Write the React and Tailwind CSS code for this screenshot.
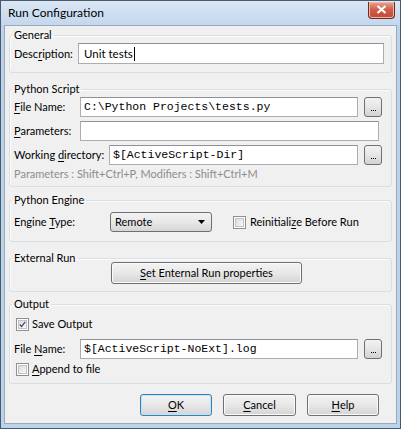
import React from 'react'

function Mn({ children }) {
    return <span className="underline underline-offset-[2px] decoration-[1px]">{children}</span>
}

function Label({ children, className = '' }) {
    return <span className={`shrink-0 whitespace-nowrap ${className}`}>{children}</span>
}

function TextBox({ children, className = '', mono = true }) {
    return (
        <div className={`flex h-[20px] shrink-0 items-center overflow-hidden whitespace-nowrap border border-[#abadb3] border-t-[#8e9298] bg-white text-black ${mono ? "px-[3px] font-['Liberation_Mono',monospace] text-[11.5px] text-[#1a1a1a]" : 'px-[5px] text-[11.5px]'} ${className}`}>
            {children}
        </div>
    )
}

function DotsButton() {
    return (
        <div className="ml-[6px] flex h-[20px] w-[18px] shrink-0 items-end justify-center rounded-[3px] border border-[#707070] bg-gradient-to-b from-[#f2f2f2] via-[#e6e6e6] to-[#d2d2d2] pb-[5px] text-black">
            <div className="flex gap-[1px]">
                <span className="h-[1px] w-[1px] bg-black" />
                <span className="h-[1px] w-[1px] bg-black" />
                <span className="h-[1px] w-[1px] bg-black" />
            </div>
        </div>
    )
}

function Button({ children, className = '', primary = false }) {
    return (
        <div className={`flex h-[22px] shrink-0 items-center justify-center whitespace-nowrap rounded-[3px] border bg-gradient-to-b from-[#f3f3f3] via-[#e8e8e8] to-[#d4d4d4] text-black ${primary ? 'border-[#3c7fb1] shadow-[inset_0_0_0_1px_#bfe4f8]' : 'border-[#707070] shadow-[inset_0_0_0_1px_#fbfbfb]'} ${className}`}>
            {children}
        </div>
    )
}

function CheckBox({ checked = false }) {
    return (
        <div className="flex h-[13px] w-[13px] shrink-0 items-center justify-center border border-[#8f8f8f] bg-white">
            <div className="flex h-[9px] w-[9px] items-center justify-center border border-[#c3c3c3] bg-gradient-to-br from-[#dcdcdc] to-[#f8f8f8]">
                {checked && (
                    <svg width="9" height="9" viewBox="0 0 9 9">
                        <path d="M1 4.5 L3.4 7 L8 1" fill="none" stroke="#3c4f75" strokeWidth="1.6" />
                    </svg>
                )}
            </div>
        </div>
    )
}

function Group({ title, children, className = '' }) {
    return (
        <fieldset className={`rounded-[3px] border border-[#d5dfe5] px-[4px] shadow-[inset_1px_1px_0_#fcfcfc] ${className}`}>
            <legend className="-ml-[2px] px-[2px] leading-[16px] text-black">{title}</legend>
            {children}
        </fieldset>
    )
}

export default function App() {
    return (
        <div className="h-[429px] w-[401px] overflow-hidden border border-[#4b5a6b] bg-[#bcd3ec] font-['Lato',sans-serif] text-[11px] leading-[16px] text-black">
            <div className="flex h-[24px] items-center justify-between bg-gradient-to-b from-[#dae7f5] to-[#c3d7ed] pl-[7px] pr-[5px]">
                <span className="text-[12px] leading-none">Run Configuration</span>
                <div className="-mt-[6px] flex h-[17px] w-[27px] items-center justify-center rounded-b-[4px] border border-t-0 border-[#6b2a22] bg-gradient-to-b from-[#e8a493] via-[#cf5a45] to-[#c24a36] shadow-[inset_0_0_0_1px_#f0b8a8]">
                    <svg width="11" height="9" viewBox="0 0 11 9">
                        <path d="M1.5 1 L9.5 8 M9.5 1 L1.5 8" stroke="#fff" strokeWidth="2.2" />
                    </svg>
                </div>
            </div>

            <div className="mx-[3px] h-[399px] border border-[#9aaabb] bg-[#f0f0f0] px-[4px]">
                <Group title="General" className="mt-[1px] pb-[8px]">
                    <div className="flex items-center">
                        <Label className="w-[64px]">Desc<Mn>r</Mn>iption:</Label>
                        <TextBox className="h-[21px] w-[306px]" mono={false}>
                            <span>Unit tests</span>
                            <span className="ml-[1px] h-[14px] w-[1px] bg-black" />
                        </TextBox>
                    </div>
                </Group>

                <Group title="Python Script" className="mt-[8px] pb-[4px]">
                    <div className="flex items-center">
                        <Label className="w-[66px]"><Mn>F</Mn>ile Name:</Label>
                        <TextBox className="w-[278px]">C:\Python Projects\tests.py</TextBox>
                        <DotsButton />
                    </div>
                    <div className="mt-[4px] flex items-center">
                        <Label className="w-[66px]"><Mn>P</Mn>arameters:</Label>
                        <TextBox className="w-[299px]" />
                    </div>
                    <div className="mt-[4px] flex items-center">
                        <Label className="w-[95px]">Working <Mn>d</Mn>irectory:</Label>
                        <TextBox className="w-[249px]">$[ActiveScript-Dir]</TextBox>
                        <DotsButton />
                    </div>
                    <div className="mt-[1px] whitespace-nowrap text-[#8d8d8d]">Parameters : Shift+Ctrl+P, Modifiers : Shift+Ctrl+M</div>
                </Group>

                <Group title="Python Engine" className="mt-[5px] pb-[9px]">
                    <div className="mt-[4px] flex items-center">
                        <Label className="w-[96px]">Engine <Mn>T</Mn>ype:</Label>
                        <div className="flex h-[20px] w-[102px] shrink-0 items-center justify-between rounded-[3px] border border-[#707070] bg-gradient-to-b from-[#f3f3f3] via-[#e8e8e8] to-[#d6d6d6] pl-[4px] pr-[6px]">
                            <span>Remote</span>
                            <svg width="7" height="4" viewBox="0 0 7 4">
                                <path d="M0 0 H7 L3.5 4 Z" fill="#000" />
                            </svg>
                        </div>
                        <div className="ml-[21px]"><CheckBox /></div>
                        <Label className="ml-[4px]">Reinitiali<Mn>z</Mn>e Before Run</Label>
                    </div>
                </Group>

                <Group title="External Run" className="mt-[8px] pb-[7px]">
                    <div className="-mt-[4px] flex">
                        <Button className="ml-[97px] w-[191px]"><Mn>S</Mn>et Enternal Run properties</Button>
                    </div>
                </Group>

                <Group title="Output" className="mt-[4px] pb-[6px]">
                    <div className="mt-[4px] flex h-[16px] items-center">
                        <div className="ml-[2px]"><CheckBox checked /></div>
                        <Label className="ml-[3px]">Save Output</Label>
                    </div>
                    <div className="mt-[7px] flex items-center">
                        <Label className="w-[66px]">File <Mn>N</Mn>ame:</Label>
                        <TextBox className="w-[278px]">$[ActiveScript-NoExt].log</TextBox>
                        <DotsButton />
                    </div>
                    <div className="mt-[2px] flex h-[16px] items-center">
                        <div className="ml-[2px]"><CheckBox /></div>
                        <Label className="ml-[3px]"><Mn>A</Mn>ppend to file</Label>
                    </div>
                </Group>

                <div className="mt-[10px] flex justify-end gap-[11px] pr-[13px]">
                    <Button primary className="w-[72px]"><Mn>O</Mn>K</Button>
                    <Button className="w-[73px]"><Mn>C</Mn>ancel</Button>
                    <Button className="w-[72px]"><Mn>H</Mn>elp</Button>
                </div>
            </div>
        </div>
    )
}
